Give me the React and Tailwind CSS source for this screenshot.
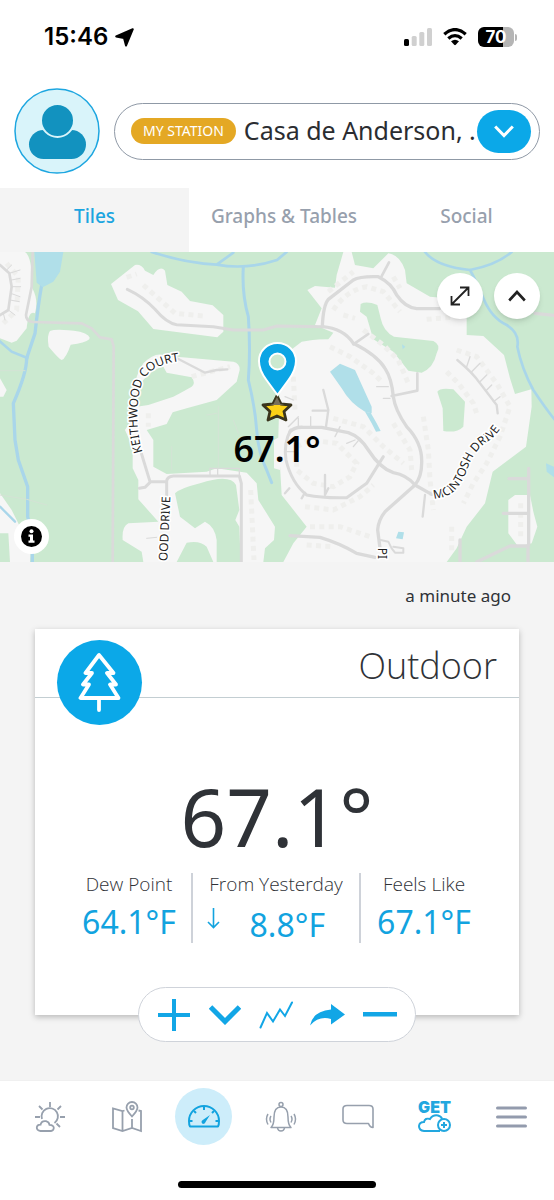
import React from "react";

const green = "#cbe9d0";
const water = "#b0dfe9";
const stream = "#a9d6ea";

function AreaMap() {
  return (
    <svg
      className="block h-[310px] w-full"
      viewBox="0 6 1662 930"
      preserveAspectRatio="xMidYMid slice"
      role="img"
      aria-label="Map of the station's surroundings"
    >
      <rect x="-400" y="0" width="2600" height="940" fill={green} />

      <g fill="#f6f6f6">
        <path d="M0 6H75Q97 20 97 115Q116 150 105 190Q85 180 80 235L50 272L35 278L0 265Z" />
        <path d="M150 243Q170 235 240 245Q275 256 268 268Q255 280 212 284Q198 325 185 330Q175 325 146 290Q140 255 150 243Z" />
        <path d="M333 102L405 45Q425 42 435 62L460 75Q480 45 495 62L502 105L545 125L570 153L638 166L670 195V245L652 262L460 237L414 184L354 150Z" />
        <path d="M495 345Q500 318 530 320L700 335Q720 340 719 360L710 395L650 450L560 475L518 487L500 522L440 540L460 570V650L500 672L620 665L650 655L740 668L770 700L775 750L825 830L822 870L795 895L790 936H640L620 890Q600 870 560 878L530 936H430L425 905L368 870Q365 830 385 820L475 815L415 748V690L398 655V590L375 540L400 500Q385 410 430 340Q470 300 500 320Z" />
        <path d="M0 385L20 420L10 440H0Z" />
        <path d="M0 730L35 780L60 830L95 860L90 936H30L25 850H0Z" />
        <path d="M1010 75L1030 6H1055L1065 45L1120 55L1165 10Q1200 15 1215 60L1220 100L1290 140L1400 150V255L1450 258L1512 315L1530 385L1545 432L1594 418L1595 470L1578 590L1478 665L1455 760L1400 830L1370 895L1340 936H850L880 880L920 830L845 735L835 560L840 380L860 310L905 275L990 262L1000 248L945 225L965 175L922 120L945 108L1005 113Z" />
        <path d="M1525 750L1545 735H1590L1600 785L1612 830L1595 880L1555 890L1525 850Z" />
        <path d="M822 570L840 560V660L822 655Z" />
      </g>

      <g fill={green}>
        <path d="M500 368L575 382Q588 400 575 410L540 430L520 440L445 465L410 470Q400 430 430 390Q460 355 490 350Z" />
        <path d="M525 730Q540 715 600 700Q690 670 708 705L718 780L706 810L718 830L722 936H650V870Q645 830 615 815L585 835L540 800Z" />
        <path d="M1082 162Q1100 152 1132 165L1142 205Q1150 245 1182 260L1300 273Q1325 285 1310 310Q1300 355 1265 368L1225 362L1180 305L1120 268L1100 200L1080 185Z" />
        <path d="M1312 425Q1320 412 1360 418L1395 455L1390 530Q1370 550 1330 543L1328 475Z" />
        <path d="M831 238L960 240Q1005 245 985 268L870 270L831 285Z" />
      </g>

      {/* building footprints */}
      <g fill="none" stroke="#efefed" strokeWidth="15" strokeDasharray="15 13">
        <path d="M380 82L410 72M430 105L525 190L610 198" />
        <path d="M20 40L55 80L50 180L10 220" />
        <path d="M1000 180Q1040 120 1100 110L1150 125L1200 185" />
        <path d="M1280 208L1380 200" />
        <path d="M985 125L1060 65M1180 80L1200 115" />
        <path d="M990 290L1050 320L1120 370L1150 400M1180 520L1230 600L1235 660" />
        <path d="M1030 195L1065 205M1090 240L1150 285L1195 330L1225 400" />
        <path d="M880 380L885 480M1000 505L1090 530L1150 590L1210 640" />
        <path d="M890 590L930 570L1010 580L1070 640L1050 680L1000 710L940 700L890 660Z" />
        <path d="M915 770L1000 780L1080 740L1120 705" />
        <path d="M930 830L1020 830L1110 860" />
        <path d="M920 885L1000 890" />
        <path d="M1340 365L1375 400L1420 460L1430 490" />
        <path d="M1370 300L1430 320L1490 400L1530 470L1500 560L1460 640L1420 700L1390 760" />
        <path d="M1270 500L1285 600L1290 690L1300 780" />
        <path d="M1355 830V910M1562 760V870M752 720L762 930M575 380L690 350M445 490V530" />
      </g>

      <g fill="none" stroke={stream} strokeWidth="10" strokeLinecap="round">
        <path d="M125 105Q115 160 105 250L80 325Q80 370 40 460L45 570L55 630L83 710V800L97 860V936" />
        <path d="M-5 270L35 305L82 324" strokeWidth="8" />
        <path d="M455 6Q560 40 650 44Q740 60 831 30L860 6M650 44L700 8" strokeWidth="8" />
        <path d="M730 50Q725 130 745 200Q752 300 745 390Q765 470 770 540Q775 610 800 660L815 698" strokeWidth="9" />
        <path d="M1275 6Q1310 50 1410 60Q1490 45 1535 6M1410 60Q1430 95 1450 145Q1475 205 1520 225Q1560 250 1552 290Q1565 355 1600 420Q1640 480 1665 510" strokeWidth="8" />
        <path d="M0 770L45 815" strokeWidth="7" />
      </g>
      <g fill={water}>
        <path d="M103 6H190L180 65L160 95L128 112L110 98Z" />
        <path d="M990 365L1020 341L1065 360L1115 470V490L1095 485Q1050 460 1025 415Z" />
        <path d="M1095 485L1112 488L1130 520L1142 543L1128 545L1115 520Z" />
        <path d="M1195 845L1212 847L1208 868L1188 865ZM1638 640L1662 650V682L1640 665ZM1206 283L1216 290L1208 298Z" />
      </g>

      <g fill="none" stroke="#dadada" strokeLinecap="round" strokeLinejoin="round">
        <path strokeWidth="8" d="M98 6L95 110L78 195Q78 215 100 216L245 220L275 235L300 262L335 268L341 290L338 936" />
        <path strokeWidth="9" d="M382 118Q430 140 465 178Q500 220 530 224L640 230L700 240L790 240L831 228L970 230" />
        <path strokeWidth="7" d="M525 322L615 368L650 360L682 358" />
        <path strokeWidth="9" d="M418 590L450 695H500Q500 680 520 678H718L724 700V936M500 695V740M450 697L435 712L418 715" />
        <path strokeWidth="4" d="M630 678V655H718V678M653 678V655" />
        <path strokeWidth="8" d="M0 45L28 70L35 110L25 180L0 195" />
        <path strokeWidth="3" d="M28 70L60 60M35 90L60 85M34 110L62 110M32 130L60 140M30 150L58 155M25 180L45 195M20 60L35 45M10 190L15 210M440 865L470 862" />
        <path strokeWidth="10" d="M967 228Q970 165 985 148L1060 90Q1080 78 1135 80Q1175 100 1190 135Q1215 172 1250 176H1318" />
        <path strokeWidth="8" d="M1143 82L1167 37M1060 283L1105 252M1175 438L1252 422V370" />
        <path strokeWidth="10" d="M967 230Q1030 235 1060 280Q1130 315 1155 355Q1175 385 1180 440Q1185 480 1220 530Q1268 580 1265 640Q1265 680 1245 705L1155 785Q1135 810 1133 840L1140 895" />
        <path strokeWidth="10" d="M870 545Q885 530 910 532H965L1045 548Q1080 560 1105 600Q1140 655 1180 668Q1220 675 1245 705L1295 733" />
        <path strokeWidth="9" d="M872 540Q850 580 858 630Q875 700 920 735Q970 745 1040 743L1100 700L1150 620" />
        <path strokeWidth="7" d="M978 530L985 480L970 420M938 482H980M975 675V735L985 715M905 745L915 728M868 715L855 730M1275 735L1268 800M1372 330Q1420 370 1440 400L1490 465L1493 490" />
        <path strokeWidth="4" d="M855 440L880 450M865 530L895 500M895 530V505M932 530V500M1005 560L1020 530M1040 580L1065 570M1060 590L1075 572M855 605H885M1130 410H1165M1150 445H1170M1400 350L1410 320M1415 365L1440 340M1440 395L1460 375M1460 420L1475 405M1480 455L1500 440" />
        <path strokeWidth="10" d="M870 857L960 862Q1020 880 1070 910L1125 922" />
        <path strokeWidth="6" d="M1142 870L1165 875L1175 895L1185 908H1210V895L1180 890" />
        <path strokeWidth="10" d="M1586 655V885M1527 686H1582M1510 790H1582M1380 870V936M1430 936L1530 888H1584V936M1605 190L1662 196" />
        <path strokeWidth="3" d="M0 362H75M0 735L80 748L140 765M655 470V655M515 590V660M620 495L650 490M700 510L715 550" stroke="#d4e3d5" />
      </g>

      <defs>
        <path id="road-keithwood" d="M428 606C405 540 408 440 428 396Q452 338 560 332" />
        <path id="road-ood" d="M502 934L513 700" />
        <path id="road-mcintosh" d="M1302 746C1390 740 1395 660 1416 625Q1436 590 1470 570Q1505 545 1530 480" />
        <path id="road-pi" d="M1135 893V960" />
      </defs>
      <g
        fill="#222"
        stroke="#fff"
        strokeWidth="10"
        strokeLinejoin="round"
        paintOrder="stroke"
        fontFamily="'Noto Sans', sans-serif"
        fontSize="36"
      >
        <text><textPath href="#road-keithwood">KEITHWOOD COURT</textPath></text>
        <text><textPath href="#road-ood">OOD DRIVE</textPath></text>
        <text><textPath href="#road-mcintosh">MCINTOSH DRIVE</textPath></text>
        <text><textPath href="#road-pi">PI</textPath></text>
      </g>
    </svg>
  );
}

function StatusBar() {
  return (
    <div className="flex h-[74px] items-center justify-between pl-11 pr-[37px]">
      <div className="flex items-center gap-[7px] font-['Inter',sans-serif] text-[24px] font-semibold text-black">
        <span>15:46</span>
        <svg width="19" height="19" viewBox="0 0 19 19" stroke="#000" strokeWidth="2" strokeLinejoin="round" aria-hidden="true">
          <path d="M17.800 1.200L11 17.500L9 10L1.200 8.500Z" />
        </svg>
      </div>
      <div className="flex items-center gap-[11px]">
        <svg width="28" height="18" viewBox="0 0 28 18" aria-hidden="true">
          <rect x="0" y="11" width="5" height="7" rx="1.500" />
          <g fill="#d0d0d0">
            <rect x="7.700" y="8" width="5" height="10" rx="1.500" />
            <rect x="15.300" y="4" width="5" height="14" rx="1.500" />
            <rect x="23" y="0" width="5" height="18" rx="1.500" />
          </g>
        </svg>
        <svg width="24" height="18" viewBox="0 0 24 18" aria-hidden="true">
          <g fill="none" stroke="#000" strokeWidth="3.300">
            <path d="M1.300 6.200Q12 -3 22.700 6.200" />
            <path d="M5.300 10.500Q12 4.700 18.700 10.500" />
          </g>
          <path d="M8 13.300Q12 10 16 13.300L12.800 16.800Q12 17.600 11.200 16.800Z" />
        </svg>
        <div className="flex items-center gap-px">
          <div className="flex h-[20px] w-9 items-center justify-center rounded-md bg-[linear-gradient(90deg,#000_70%,#b5b5b5_70%)] font-['Inter',sans-serif] text-[17px] font-bold leading-none text-white">
            70
          </div>
          <div className="h-[7px] w-[2px] rounded-r bg-[#b5b5b5]" />
        </div>
      </div>
    </div>
  );
}

function Header() {
  return (
    <header className="flex items-center gap-[14px] px-[14px] pb-[14px] pt-[14px]">
      <button type="button" aria-label="Profile" className="shrink-0 rounded-full">
        <svg width="86" height="86" viewBox="0 0 86 86" aria-hidden="true">
          <circle cx="43" cy="43" r="42" fill="#d9f4fa" stroke="#1da6e0" strokeWidth="1.500" />
          <rect x="15" y="42" width="57" height="29" rx="14.500" fill="#1292bf" />
          <circle cx="43.500" cy="32.500" r="16.500" fill="#1292bf" stroke="#d9f4fa" strokeWidth="2" />
        </svg>
      </button>
      <button
        type="button"
        className="flex h-[57px] min-w-0 flex-1 items-center rounded-full border border-[#8f99a6] pl-4 pr-2 text-left"
      >
        <span className="flex h-[26px] shrink-0 items-center rounded-full bg-[#e4a824] px-3 text-sm text-white">
          MY STATION
        </span>
        <span className="ml-2 flex-1 whitespace-nowrap text-[25px] text-[#2b2d31]">Casa de Anderson, .</span>
        <span className="-ml-3 flex h-[43px] w-[54px] shrink-0 items-center justify-center rounded-full bg-[#0ba8e8]">
          <svg width="20" height="13" viewBox="0 0 20 13" fill="none" stroke="#fff" strokeWidth="3" aria-hidden="true">
            <path d="M1.200 1.500L10 10.500L18.800 1.500" />
          </svg>
        </span>
      </button>
    </header>
  );
}

function Tabs() {
  return (
    <nav className="grid h-16 grid-cols-[189fr_190fr_175fr] text-[19px] font-medium text-[#97a0ad]">
      <button type="button" aria-current="page" className="bg-[#f4f4f4] pb-2 text-[#1ba5e0]">Tiles</button>
      <button type="button" className="whitespace-nowrap pb-2">Graphs &amp; Tables</button>
      <button type="button" className="pb-2">Social</button>
    </nav>
  );
}

function MapPanel() {
  return (
    <section className="relative overflow-hidden">
      <AreaMap />
      <div className="absolute left-1/2 top-[90px] flex -translate-x-1/2 flex-col items-center">
        <svg width="40" height="82" viewBox="0 0 40 82" aria-hidden="true">
          <path
            d="M19.500 54L23.500 62L33.500 63L26.500 69.500L28.500 78L19.500 74L10.500 78L12.500 69.500L5.500 63L15.500 62Z"
            fill="#fcd116"
            stroke="#3a351d"
            strokeWidth="2.800"
            strokeLinejoin="round"
          />
          <path d="M19.500 55L23 62L27 63H12L16 62Z" fill="#77705a" />
          <path
            d="M20 53L9 38Q1.500 28 1.500 19A18.500 18 0 0 1 38.500 19Q38.500 28 31 38Z"
            fill="#0ba5e5"
            stroke="#fff"
            strokeWidth="2"
          />
          <circle cx="20" cy="19.500" r="8" fill="#cbe9d0" stroke="#fff" strokeWidth="2" />
        </svg>
        <span className="text-[36px] font-semibold leading-[50px] text-black">67.1°</span>
      </div>
      <div className="absolute right-[14px] top-[21px] flex gap-[11px]">
        <button type="button" aria-label="Expand map" className="flex size-[46px] items-center justify-center rounded-full bg-white shadow-md">
          <svg width="20" height="20" viewBox="0 0 20 20" fill="none" stroke="#222" strokeWidth="1.800" aria-hidden="true">
            <path d="M1.500 18.500L18.500 1.500M10 1.500H18.500V10M1.500 10V18.500H10" />
          </svg>
        </button>
        <button type="button" aria-label="Collapse map" className="flex size-[46px] items-center justify-center rounded-full bg-white shadow-md">
          <svg width="18" height="12" viewBox="0 0 18 12" fill="none" stroke="#222" strokeWidth="2.600" aria-hidden="true">
            <path d="M1.200 10.500L9 2L16.800 10.500" />
          </svg>
        </button>
      </div>
      <button type="button" aria-label="Map information" className="absolute bottom-2 left-[14px] flex size-[35px] items-center justify-center rounded-full bg-white">
        <svg width="21" height="21" viewBox="0 0 21 21" aria-hidden="true">
          <circle cx="10.500" cy="10.500" r="10.500" />
          <circle cx="10.500" cy="5.300" r="2" fill="#fff" />
          <path d="M7.500 8.500H12V14.500H13.500V16.800H7.500V14.500H9V10.800H7.500Z" fill="#fff" />
        </svg>
      </button>
    </section>
  );
}

function OutdoorCard() {
  return (
    <article className="relative bg-white pb-[72px] shadow-[0_2px_6px_rgba(0,0,0,0.25)]">
      <div className="relative flex h-[69px] items-center justify-end border-b border-[#c3ced2] pr-[22px] pt-[6px]">
        <div className="absolute left-[22px] top-[11px] flex size-[85px] items-center justify-center rounded-full bg-[#0ba8e8]">
          <svg width="44" height="60" viewBox="0 0 44 60" fill="none" stroke="#fff" strokeWidth="3.800" strokeLinecap="round" strokeLinejoin="round" aria-hidden="true">
            <path d="M21 2L7.500 20H14L5 31.500H11L2.500 45H40.500L32 31.500H38L29 20H35.500Z" />
            <path d="M21 45V57" />
          </svg>
        </div>
        <h2 className="font-['Open_Sans',sans-serif] text-[36px] font-light text-[#2f3237]">Outdoor</h2>
      </div>
      <p className="pt-[75px] text-center text-[80px] leading-[86px] text-[#2f3237]">67.1°</p>
      <dl className="mx-8 mt-[14px] grid grid-cols-[126fr_168fr_126fr] text-center">
        <div className="h-[70px] border-r-2 border-[#ced2d9]">
          <dt className="font-['Open_Sans',sans-serif] text-[19px] font-light leading-[22px] text-[#2f3237]">Dew Point</dt>
          <dd className="whitespace-nowrap text-[32px] leading-[54px] text-[#12a3df]">64.1°F</dd>
        </div>
        <div className="h-[70px] border-r-2 border-[#ced2d9]">
          <dt className="whitespace-nowrap font-['Open_Sans',sans-serif] text-[19px] font-light leading-[22px] text-[#2f3237]">From Yesterday</dt>
          <dd className="flex items-start justify-between pl-[14px] pr-[34px] text-[32px] text-[#12a3df]">
            <svg className="mt-3" width="13" height="22" viewBox="0 0 13 22" fill="none" stroke="#12a3df" strokeWidth="1.600" aria-label="down">
              <path d="M6.500 1V20.500M1 15L6.500 20.500L12 15" />
            </svg>
            <span className="leading-[60px]">8.8°F</span>
          </dd>
        </div>
        <div className="h-[70px]">
          <dt className="font-['Open_Sans',sans-serif] text-[19px] font-light leading-[22px] text-[#2f3237]">Feels Like</dt>
          <dd className="whitespace-nowrap text-[32px] leading-[54px] text-[#12a3df]">67.1°F</dd>
        </div>
      </dl>
      <div className="absolute -bottom-[27px] left-1/2 flex h-[55px] w-[278px] -translate-x-1/2 items-center justify-between rounded-full border border-[#cfd3da] bg-white px-[18px] text-[#12a6e6]">
        <button type="button" aria-label="Add">
          <svg width="34" height="34" viewBox="0 0 34 34" stroke="currentColor" strokeWidth="4" aria-hidden="true">
            <path d="M17 1V33M1 17H33" />
          </svg>
        </button>
        <button type="button" aria-label="Show more">
          <svg width="32" height="20" viewBox="0 0 32 20" fill="none" stroke="currentColor" strokeWidth="5" aria-hidden="true">
            <path d="M1.500 2L16 16.500L30.500 2" />
          </svg>
        </button>
        <button type="button" aria-label="Graph">
          <svg width="34" height="28" viewBox="0 0 34 28" fill="none" stroke="currentColor" strokeWidth="2" strokeLinecap="round" aria-hidden="true">
            <path d="M1.500 26.500L8 12L14 20.500L21 8.500L26 15L33 1.500" />
          </svg>
        </button>
        <button type="button" aria-label="Share">
          <svg width="35" height="22" viewBox="0 0 35 22" fill="currentColor" aria-hidden="true">
            <path d="M21 0L35 10.500L21 20.500V15Q9 11.500 0 21.500Q3 7 21 5.500Z" />
          </svg>
        </button>
        <button type="button" aria-label="Remove">
          <svg width="34" height="5" viewBox="0 0 34 5" fill="currentColor" aria-hidden="true">
            <rect width="34" height="4.500" />
          </svg>
        </button>
      </div>
    </article>
  );
}

function NavButton({ label, children }) {
  return (
    <button type="button" aria-label={label} className="flex h-[57px] items-center justify-center">
      {children}
    </button>
  );
}

function BottomNav() {
  return (
    <footer className="border-t border-[#f0f0f0] bg-white pb-3 pt-[7px]">
      <nav className="grid grid-cols-7 pl-[11px] pr-1 text-[#97a0ad]">
        <NavButton label="Weather">
          <svg width="32" height="32" viewBox="0 0 32 32" fill="none" stroke="currentColor" strokeWidth="1.800" aria-hidden="true">
            <path d="M16 1V6M5 5L8.500 8.500M27 5L23.500 8.500M1 16H6M26 16H31M22.500 22.500L26 26" />
            <path d="M8 18A8.200 8.200 0 1 1 20.500 22" />
            <path d="M6.500 30Q2.500 29.500 2.800 26.200Q3.500 23.500 6.500 23.700Q7.500 19.500 12 20.200Q15 21 15.500 23.800Q19.800 24 19.800 27Q19.500 29.800 17 30Z" />
          </svg>
        </NavButton>
        <NavButton label="Map">
          <svg width="32" height="32" viewBox="0 0 32 32" fill="none" stroke="currentColor" strokeWidth="1.800" aria-hidden="true">
            <path d="M13.500 9.500L11.500 10L2 7.500V27L11.500 30L21 27L30 30V10L27.500 9.500M11.500 10V30M21 18V27" />
            <path d="M21 15.500Q15.500 9.500 15.500 6.500A5.500 5.500 0 0 1 26.500 6.500Q26.500 9.500 21 15.500Z" />
            <circle cx="21" cy="6.500" r="1.800" />
          </svg>
        </NavButton>
        <NavButton label="Dashboard">
          <span className="flex size-[57px] shrink-0 items-center justify-center rounded-full bg-[#cdedfa] text-[#12a3df]">
            <svg width="32" height="23" viewBox="0 0 32 23" fill="none" stroke="currentColor" strokeWidth="2" aria-hidden="true">
              <path d="M2 21.500Q1 20 1 16A15 15 0 0 1 31 16Q31 20 30 21.500Z" strokeLinejoin="round" />
              <path d="M1 16H4.500M27.500 16H31M16 2V5M6 6L8 8M26 6L24 8" />
              <path d="M22 10L17.500 17A2 2 0 1 1 14.800 15Z" fill="currentColor" stroke="none" />
            </svg>
          </span>
        </NavButton>
        <NavButton label="Alerts">
          <svg width="32" height="32" viewBox="0 0 32 32" fill="none" stroke="currentColor" strokeWidth="1.500" aria-hidden="true">
            <circle cx="16" cy="3.500" r="2" />
            <path d="M6 26.500Q9 24 9 16Q9 6 16 6Q23 6 23 16Q23 24 26 26.500Z" strokeLinejoin="round" />
            <path d="M12.500 27Q13 30 16 30Q19 30 19.500 27M6 15Q4 18 6 21.500M3 13Q0 18 3 23.500M26 15Q28 18 26 21.500M29 13Q32 18 29 23.500" />
          </svg>
        </NavButton>
        <NavButton label="Messages">
          <svg width="32" height="25" viewBox="0 0 32 25" fill="none" stroke="currentColor" strokeWidth="1.600" strokeLinejoin="round" aria-hidden="true">
            <path d="M5 1.500H27Q31 1.500 31 5V23.500Q28 23.500 26.500 19.500H5Q1 19.500 1 16V5Q1 1.500 5 1.500Z" />
          </svg>
        </NavButton>
        <NavButton label="Get more stations">
          <span className="flex flex-col items-center text-[#22a7df]">
            <span className="font-['Inter',sans-serif] text-[16px] font-black leading-[13px]">GET</span>
            <svg width="33" height="18" viewBox="0 0 33 18" fill="none" stroke="currentColor" strokeWidth="2" aria-hidden="true">
              <path d="M22 17H6Q1 16.500 1 12Q1.500 8 6 8Q7 3.500 12 5Q15 .5 20 1.500Q23.500 2.500 24 5" />
              <circle cx="26" cy="11" r="6" />
              <path d="M26 8V14M23 11H29" />
            </svg>
          </span>
        </NavButton>
        <NavButton label="Menu">
          <svg width="31" height="22" viewBox="0 0 31 22" stroke="#939bad" strokeWidth="3" strokeLinecap="round" aria-hidden="true">
            <path d="M1.500 2H29.500M1.500 11H29.500M1.500 20H29.500" />
          </svg>
        </NavButton>
      </nav>
      <div className="mx-auto mt-9 h-[7px] w-[198px] rounded-full bg-black" />
    </footer>
  );
}

export default function App() {
  return (
    <div className="min-h-screen bg-white font-['Noto_Sans',sans-serif]">
      <StatusBar />
      <Header />
      <Tabs />
      <MapPanel />
      <main className="bg-[#f4f4f4] px-[35px] pb-[65px]">
        <p className="pb-5 pr-2 pt-[21px] text-right text-[17px] leading-[26px] text-[#2f3237]">a minute ago</p>
        <OutdoorCard />
      </main>
      <BottomNav />
    </div>
  );
}
